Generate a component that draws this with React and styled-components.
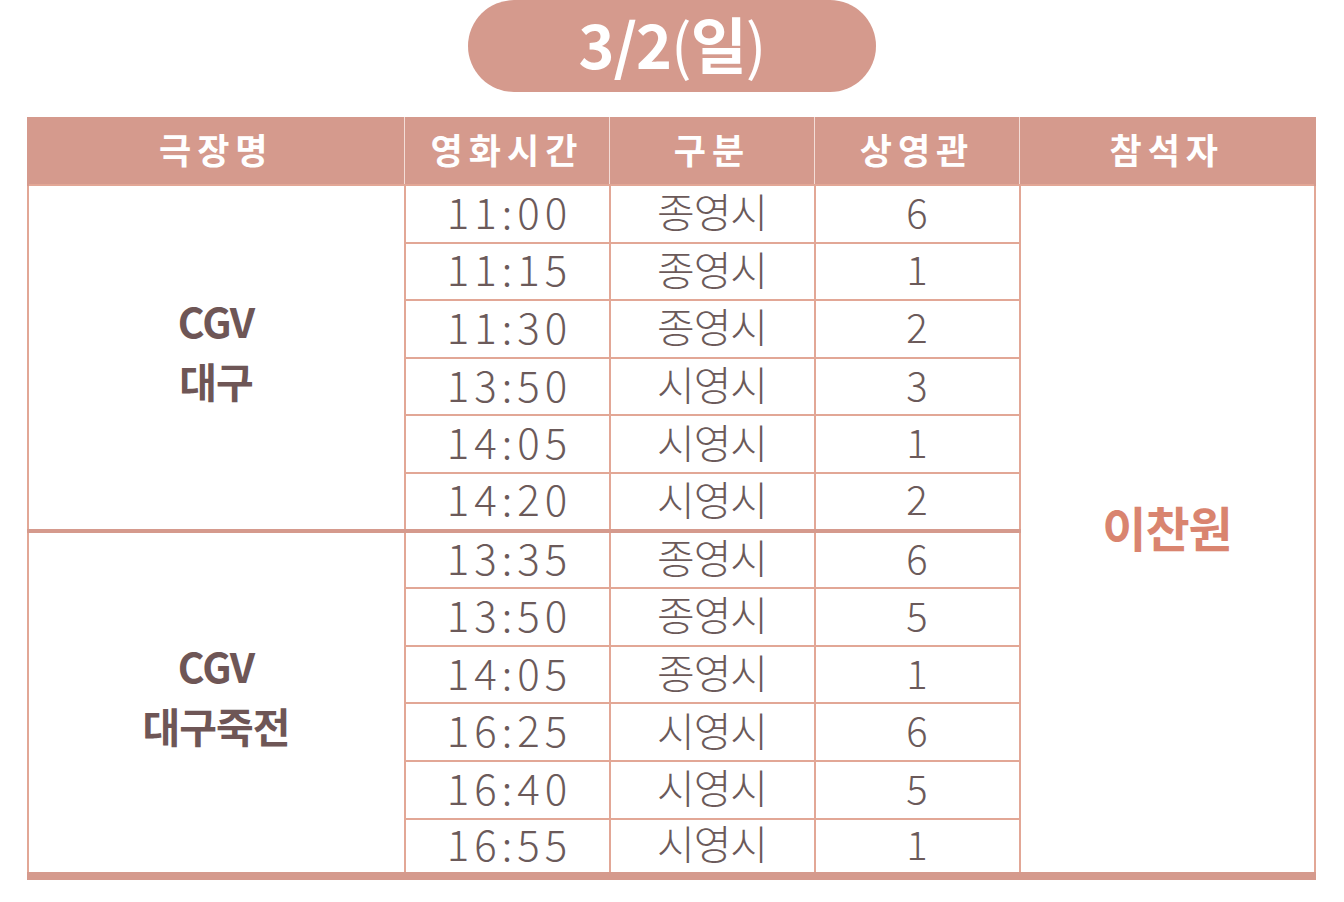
import React from 'react';
import styled, { createGlobalStyle } from 'styled-components';

const GlobalStyle = createGlobalStyle`
  html, body {
    margin: 0;
    padding: 0;
    background-color: #ffffff;
    font-family: "Noto Sans CJK KR", "Noto Sans", sans-serif;
  }
`;

const ACCENT = '#d59a8d';
const LINE = '#e2a796';

const Page = styled.div`
  width: 1344px;
  display: flex;
  flex-direction: column;
  align-items: center;
`;

const DatePill = styled.div`
  width: 408px;
  height: 92px;
  box-sizing: border-box;
  padding-bottom: 8px;
  border-radius: 46px;
  background-color: ${ACCENT};
  color: #fff;
  display: flex;
  align-items: center;
  justify-content: center;
  font-size: 61px;
  font-weight: 700;
  letter-spacing: -1px;
  line-height: 1;
  margin-bottom: 25px;
`;

const Paren = styled.span`
  font-weight: 400;
`;

const Table = styled.table`
  width: 1287px;
  margin-left: -2px;
  border-collapse: collapse;
  table-layout: fixed;
  border-bottom: 8px solid ${ACCENT};
`;

const HeadCell = styled.th`
  height: 63px;
  padding: 0 0 4px;
  background-color: ${ACCENT};
  color: #fff;
  font-size: 35px;
  font-weight: 700;
  letter-spacing: 6px;
  text-align: center;
  border-left: 1px solid #f4ddd7;
  &:first-child {
    border-left: 2px solid ${ACCENT};
  }
  &:last-child {
    border-right: 2px solid ${ACCENT};
  }
`;

const Row = styled.tr`
  height: 57.6px;
`;

const Cell = styled.td`
  padding: 0 0 6px;
  text-align: center;
  border: 2px solid ${LINE};
  border-top-width: ${({ $split }) => ($split ? '4px' : '2px')};
  border-top-color: ${({ $split }) => ($split ? ACCENT : LINE)};
  color: #6b5a5a;
  font-size: 40px;
  font-weight: 300;
  line-height: 1;
`;

const TimeCell = styled(Cell)`
  letter-spacing: 5px;
  font-size: 42px;
  text-indent: 5px;
`;

const KindCell = styled(Cell)`
  font-size: 41px;
  letter-spacing: -1px;
`;

const TheaterCell = styled(Cell)`
  padding-bottom: 14px;
  color: #6e5656;
  font-size: 41px;
  font-weight: 700;
  letter-spacing: -1px;
  line-height: 60px;
`;

const GuestCell = styled(Cell)`
  color: #d9846f;
  font-size: 48px;
  font-weight: 700;
  letter-spacing: -1px;
`;

const groups = [
  {
    name: ['CGV', '대구'],
    rows: [
      ['11:00', '종영시', '6'],
      ['11:15', '종영시', '1'],
      ['11:30', '종영시', '2'],
      ['13:50', '시영시', '3'],
      ['14:05', '시영시', '1'],
      ['14:20', '시영시', '2'],
    ],
  },
  {
    name: ['CGV', '대구죽전'],
    rows: [
      ['13:35', '종영시', '6'],
      ['13:50', '종영시', '5'],
      ['14:05', '종영시', '1'],
      ['16:25', '시영시', '6'],
      ['16:40', '시영시', '5'],
      ['16:55', '시영시', '1'],
    ],
  },
];

const totalRows = groups.reduce((n, g) => n + g.rows.length, 0);

const App = () => {
  return (
    <>
      <GlobalStyle />
      <Page>
        <DatePill>
          3/2<Paren>(</Paren>일<Paren>)</Paren>
        </DatePill>
        <Table>
          <colgroup>
            <col style={{ width: 377 }} />
            <col style={{ width: 205 }} />
            <col style={{ width: 205 }} />
            <col style={{ width: 205 }} />
            <col style={{ width: 295 }} />
          </colgroup>
          <thead>
            <tr>
              <HeadCell>극장명</HeadCell>
              <HeadCell>영화시간</HeadCell>
              <HeadCell>구분</HeadCell>
              <HeadCell>상영관</HeadCell>
              <HeadCell>참석자</HeadCell>
            </tr>
          </thead>
          <tbody>
            {groups.map((g, gi) =>
              g.rows.map((r, ri) => {
                const split = gi > 0 && ri === 0;
                return (
                  <Row key={`${gi}-${ri}`}>
                    {ri === 0 && (
                      <TheaterCell rowSpan={g.rows.length} $split={split}>
                        {g.name[0]}
                        <br />
                        {g.name[1]}
                      </TheaterCell>
                    )}
                    <TimeCell $split={split}>{r[0]}</TimeCell>
                    <KindCell $split={split}>{r[1]}</KindCell>
                    <Cell $split={split}>{r[2]}</Cell>
                    {gi === 0 && ri === 0 && (
                      <GuestCell rowSpan={totalRows}>이찬원</GuestCell>
                    )}
                  </Row>
                );
              })
            )}
          </tbody>
        </Table>
      </Page>
    </>
  );
};

export default App;
